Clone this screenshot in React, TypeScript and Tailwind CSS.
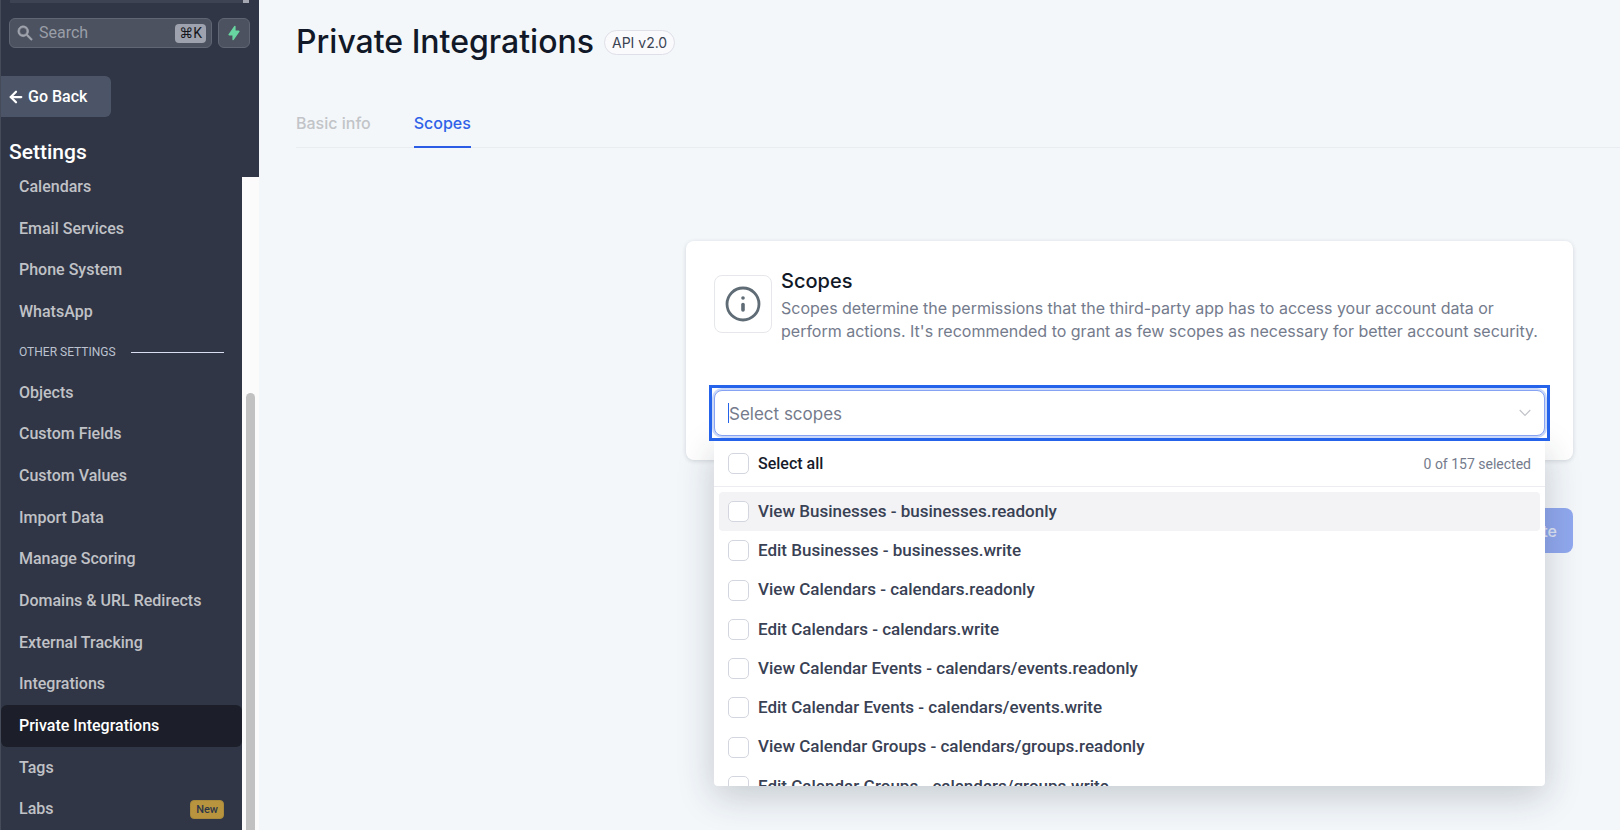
import React, { useState } from 'react';
import { HiLightningBolt, HiSearch } from 'react-icons/hi';
import { ArrowLeft } from 'lucide-react';

const ACTIVE_ITEM = 'Private Integrations';

const generalItems = ['Calendars', 'Email Services', 'Phone System', 'WhatsApp'];

const otherItems = [
    'Objects',
    'Custom Fields',
    'Custom Values',
    'Import Data',
    'Manage Scoring',
    'Domains & URL Redirects',
    'External Tracking',
    'Integrations',
    'Private Integrations',
    'Tags',
    'Labs',
];

const scopes = [
    'View Businesses - businesses.readonly',
    'Edit Businesses - businesses.write',
    'View Calendars - calendars.readonly',
    'Edit Calendars - calendars.write',
    'View Calendar Events - calendars/events.readonly',
    'Edit Calendar Events - calendars/events.write',
    'View Calendar Groups - calendars/groups.readonly',
    'Edit Calendar Groups - calendars/groups.write',
];

const TOTAL_SCOPES = 157;

const InfoIcon = () => (
    <svg className="w-9 h-9" viewBox="0 0 36 36" fill="none" stroke="#5f6c76" aria-hidden="true">
        <circle cx="18" cy="18" r="16" strokeWidth="2.8" />
        <path d="M18 18.5v5.5" strokeWidth="3.6" strokeLinecap="round" />
        <circle cx="18" cy="12" r="1.8" fill="#5f6c76" stroke="none" />
    </svg>
);

const ChevronIcon = () => (
    <svg className="w-3 h-2" viewBox="0 0 12 8" fill="none" stroke="#c2c4ca" aria-hidden="true">
        <path d="M0.7 1L6 6.4L11.3 1" strokeWidth="1.2" />
    </svg>
);

const NavItem: React.FC<{ label: string }> = ({ label }) => {
    const active = label === ACTIVE_ITEM;
    return (
        <a
            href="#"
            className={`flex flex-1 items-center justify-between pl-[18px] pr-[18px] rounded-md text-base font-medium ${
                active ? 'bg-[#1c1f29] text-white' : 'text-[#c0c2c7]'
            }`}
        >
            {label}
            {label === 'Labs' && (
                <span className="rounded-sm border border-[#a98a3c] bg-[#b8943f] px-[5px] text-[11px] leading-[17px] font-medium text-[#2f3747]">
                    New
                </span>
            )}
        </a>
    );
};

const Sidebar = () => (
    <aside className="flex flex-col w-[259px] shrink-0 min-h-screen bg-[#303645] border-l border-[#454b59] font-[Roboto,sans-serif]">
        {/* Bottom edge of the account switcher, scrolled out of view */}
        <div className="flex h-[3px] pl-[9px] pr-[10px]">
            <div className="flex-1 bg-[#3d4352]"></div>
            <div className="w-1.5 bg-[#a5a8b0]"></div>
        </div>

        <div className="flex gap-1.5 mt-[15px] pl-2 pr-[9px]">
            <div className="flex flex-1 min-w-0 items-center h-[30px] pl-1.5 pr-[5px] rounded-md border border-[#606673] bg-[#4c525f]">
                <HiSearch className="w-[18px] h-[18px] shrink-0 text-[#a0a4ad]" stroke="currentColor" strokeWidth={0.6} />
                <input
                    type="text"
                    aria-label="Search"
                    placeholder="Search"
                    className="flex-1 min-w-0 pl-[5px] text-base text-white placeholder:text-[#9a9ea8] focus:outline-none"
                />
                <kbd className="h-[19px] px-1 rounded-sm bg-[#9ea2ae] text-sm leading-[19px] font-[Roboto,'DejaVu_Sans',sans-serif] text-[#15171c]">⌘K</kbd>
            </div>
            <button type="button" aria-label="Quick actions" className="flex items-center justify-center w-8 h-[30px] shrink-0 rounded-md border border-[#606673] bg-[#4c525f]">
                <HiLightningBolt className="w-4 h-4 text-[#68d6a0]" />
            </button>
        </div>

        <button type="button" className="flex items-center gap-[3px] self-start w-[110px] h-[41px] mt-7 pl-1.5 rounded-r-md bg-[#4c5567] text-base font-medium text-white">
            <ArrowLeft className="w-[18px] h-[18px]" strokeWidth={3} />
            Go Back
        </button>

        <h2 className="mt-[22px] pl-2 text-[21px] leading-[27px] font-medium text-white">Settings</h2>

        <div className="flex flex-1">
            <nav className="flex flex-col flex-1">
                {generalItems.map((item) => (
                    <NavItem key={item} label={item} />
                ))}
                <div className="flex items-center h-[39px] px-[18px] gap-[15px]">
                    <span className="text-xs text-[#bcc2d0]">OTHER SETTINGS</span>
                    <div className="flex-1 h-px bg-[#d9def0]"></div>
                </div>
                {otherItems.map((item) => (
                    <NavItem key={item} label={item} />
                ))}
            </nav>
            {/* Scroll track */}
            <div className="flex justify-center w-[17px] mt-[11px] pt-[216px] bg-[#fbfbfb]">
                <div className="w-[9px] rounded-t-full bg-[#c1c1c1]"></div>
            </div>
        </div>
    </aside>
);

const Checkbox: React.FC<{ checked: boolean; onChange: () => void }> = ({ checked, onChange }) => (
    <input
        type="checkbox"
        checked={checked}
        onChange={onChange}
        className="appearance-none w-[21px] h-[21px] shrink-0 rounded-[5px] border border-[#d3d6de] bg-white checked:bg-blue-600"
    />
);

const ScopeSelect = () => {
    const [selected, setSelected] = useState<string[]>([]);

    const toggle = (scope: string) => {
        setSelected(selected.includes(scope) ? selected.filter((s) => s !== scope) : [...selected, scope]);
    };

    const allSelected = selected.length === scopes.length;

    return (
        <div className="relative">
            <div className="relative z-20 border-[3px] border-[#2563eb] p-0.5 bg-white">
                <div className="flex items-center h-[46px] pl-[13px] pr-[13px] rounded-lg border border-[#86a3f3] bg-white ring-2 ring-[#cbd8f7]">
                    <div className="w-px h-5 bg-[#2563eb]"></div>
                    <input
                        type="text"
                        aria-label="Select scopes"
                        placeholder="Select scopes"
                        className="flex-1 min-w-0 pt-0.5 text-[17px] leading-6 text-gray-700 placeholder:text-[#747b8c] focus:outline-none"
                    />
                    <ChevronIcon />
                </div>
            </div>

            <div className="absolute z-10 top-full left-[5px] right-[5px] h-[345px] overflow-hidden rounded-b bg-white font-[Roboto,sans-serif] shadow-[0_10px_36px_rgba(30,41,59,0.22)]">
                <div className="flex items-center justify-between h-[46px] px-3.5 border-b border-[#ededf1]">
                    <label className="flex items-center gap-[9px] text-base font-medium text-[#171b2b]">
                        <Checkbox checked={allSelected} onChange={() => setSelected(allSelected ? [] : scopes)} />
                        Select all
                    </label>
                    <span className="text-sm text-[#747b8c]">
                        {selected.length} of {TOTAL_SCOPES} selected
                    </span>
                </div>
                <div className="flex flex-col h-[319px] px-[5px] pt-[5px]">
                    {scopes.map((scope, index) => (
                        <label
                            key={scope}
                            className={`flex flex-1 items-center gap-[9px] px-[9px] rounded-sm text-[17px] font-medium text-[#394154] ${
                                index === 0 ? 'bg-[#f3f3f5]' : ''
                            }`}
                        >
                            <Checkbox checked={selected.includes(scope)} onChange={() => toggle(scope)} />
                            {scope}
                        </label>
                    ))}
                </div>
            </div>
        </div>
    );
};

const App = () => {
    return (
        <div className="flex min-h-screen bg-[#f3f7fa] font-[Inter,sans-serif]">
            <Sidebar />

            <main className="flex-1 min-w-0 pl-[37px]">
                <header className="flex items-center gap-2.5 pt-5">
                    <h1 className="text-[32px] leading-[44px] font-medium text-[#111827]">Private Integrations</h1>
                    <span className="rounded-full border border-[#dfdfe8] bg-[#fafafc] px-[7px] text-sm leading-[23px] text-[#3b4353]">API v2.0</span>
                </header>

                <div className="flex gap-[43px] mt-[47px] border-b border-[#e9edf1] text-base font-medium">
                    <button type="button" className="-mb-px pb-[11px] border-b-2 border-transparent text-[#c2c4c8]">Basic info</button>
                    <button type="button" className="-mb-px pb-[11px] border-b-2 border-[#2b5ce6] text-[#2f62e8]">Scopes</button>
                </div>

                <div className="flex flex-col items-end mt-[93px] pr-[47px]">
                    <section className="w-full max-w-[887px] px-[23px] pt-[25px] pb-[19px] rounded-lg bg-white shadow-[0_1px_4px_rgba(30,41,59,0.16)]">
                        <div className="flex items-start gap-[9px] px-[5px]">
                            <div className="flex items-center justify-center w-[58px] h-[58px] mt-[9px] shrink-0 rounded-lg border border-[#e6e7ea]">
                                <InfoIcon />
                            </div>
                            <div>
                                <h3 className="text-xl leading-[31px] font-medium text-[#111827]">Scopes</h3>
                                <p className="text-base leading-[23px] text-[#747b8c]">
                                    Scopes determine the permissions that the third-party app has to access your account data or perform actions. It's
                                    recommended to grant as few scopes as necessary for better account security.
                                </p>
                            </div>
                        </div>
                        <div className="mt-[42px]">
                            <ScopeSelect />
                        </div>
                    </section>

                    <button type="button" className="h-[45px] mt-12 px-4 rounded-lg bg-[#90a8ee] text-base font-medium text-[#dfe5f5]">
                        Create
                    </button>
                </div>
            </main>
        </div>
    );
};

export default App;
